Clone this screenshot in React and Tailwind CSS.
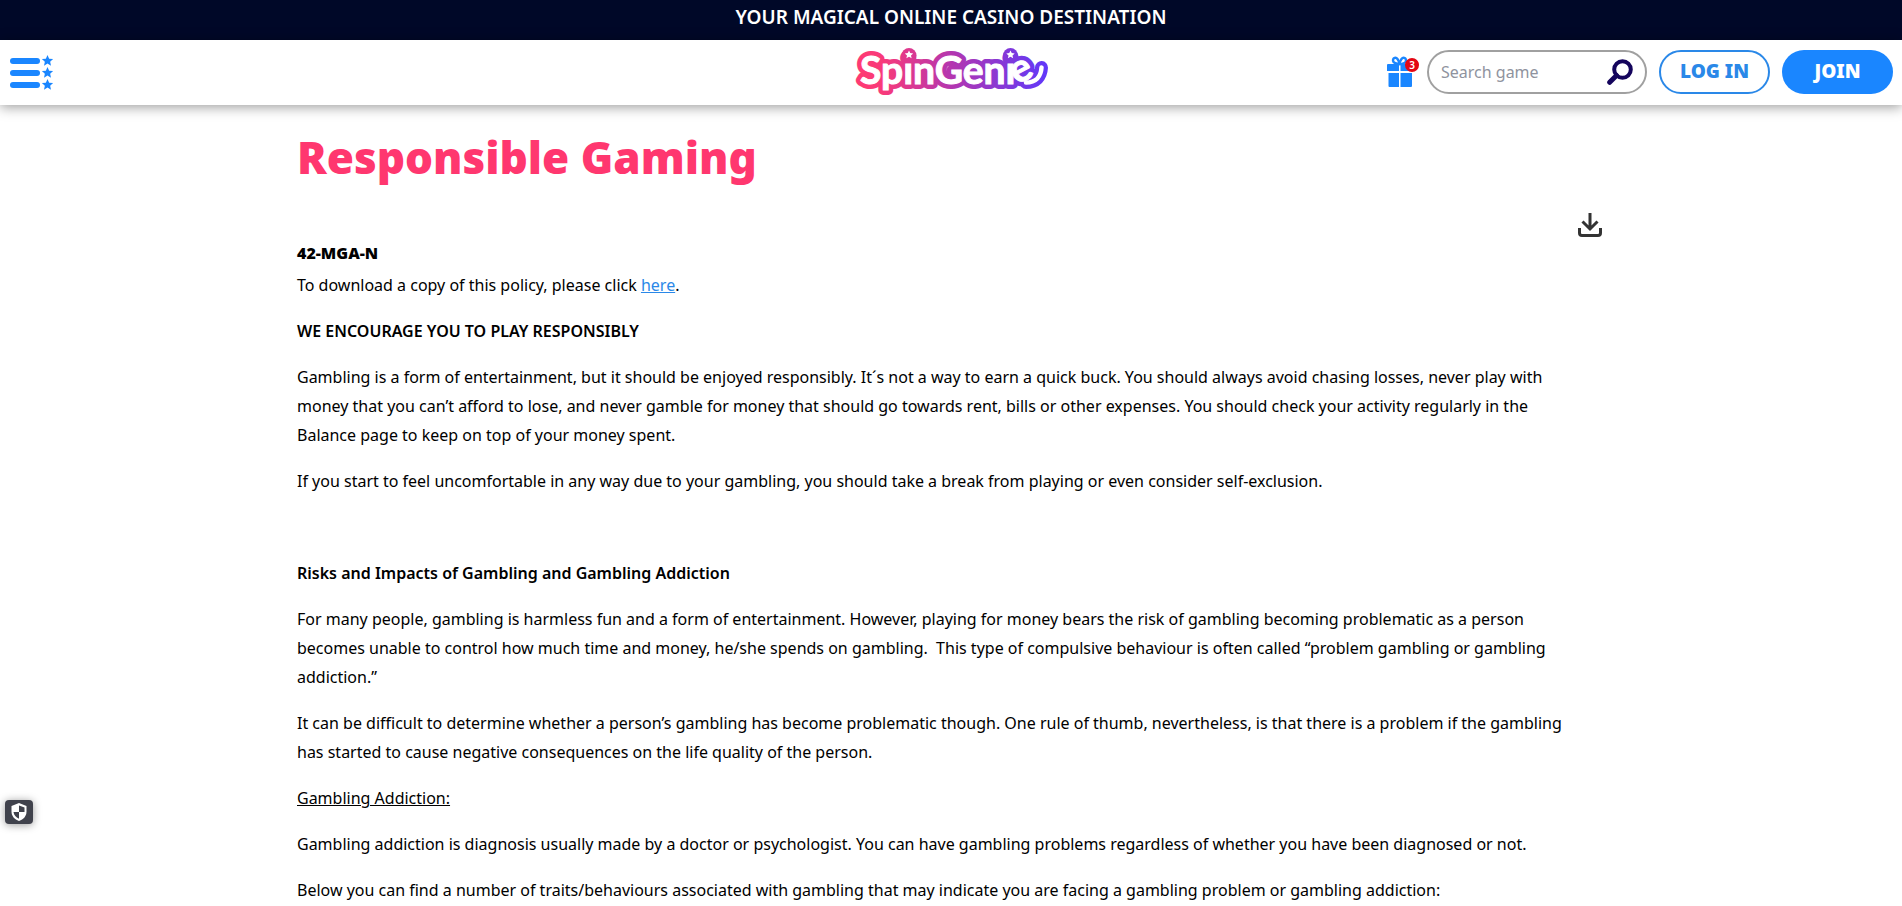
import React from "react";

const STAR = "M12 1l3.300 7.300 7.900.9-5.900 5.200 1.700 7.900L12 18.200l-7 4.100 1.700-7.900L.8 9.200l7.900-.9z";

function MenuIcon() {
  return (
    <svg width="44" height="36" viewBox="0 0 44 36" aria-hidden="true" fill="#1a86ff">
      {[0, 12, 24].map((y) => (
        <g key={y}>
          <rect x="0" y={y + 3} width="30" height="6" rx="3" />
          <svg x="31.500" y={y - 0.5} width="12" height="12" viewBox="0 0 24 24">
            <path d={STAR} />
          </svg>
        </g>
      ))}
    </svg>
  );
}

function Wordmark() {
  return (
    <>
      SpinGeni<tspan x="162" y="38" rotate="-28">e</tspan>
    </>
  );
}

function Logo() {
  const face = "font-['Lato',sans-serif] font-bold";
  return (
    <svg width="194" height="60" viewBox="0 -4 194 60" role="img" aria-label="SpinGenie" className="overflow-visible">
      <defs>
        <linearGradient id="brand" gradientUnits="userSpaceOnUse" x1="0" y1="0" x2="194" y2="0">
          <stop offset="0" stopColor="#ff3a72" />
          <stop offset="0.14" stopColor="#f83a7a" />
          <stop offset="0.5" stopColor="#b336b0" />
          <stop offset="0.8" stopColor="#7f38dc" />
          <stop offset="1" stopColor="#6038fb" />
        </linearGradient>
      </defs>
      <g fill="none" stroke="url(#brand)" strokeWidth="10" strokeLinejoin="round" strokeLinecap="round">
        <text x="5" y="37" fontSize="39" className={face}><Wordmark /></text>
        <path d="M171 35.500c10 0 15-6 15.500-15" strokeWidth="13" />
      </g>
      <text x="5" y="37" fontSize="39" fill="#fff" stroke="#fff" strokeWidth="1" className={face}><Wordmark /></text>
      <path d="M171 35.500c10 0 15-6 15.500-15" fill="none" stroke="#fff" strokeWidth="4.500" strokeLinecap="round" />
      {[54, 155.5].map((cx) => (
        <g key={cx}>
          <circle cx={cx} cy="8.500" r="7.500" fill="url(#brand)" />
          <svg x={cx - 4.5} y="3" width="9" height="9" viewBox="0 0 24 24">
            <path d={STAR} fill="#fff" />
          </svg>
        </g>
      ))}
    </svg>
  );
}

function GiftIcon() {
  return (
    <svg width="26" height="31" viewBox="0 0 26 31" aria-hidden="true" fill="#1a86ff">
      <g fill="none" stroke="#1a86ff" strokeWidth="2.400">
        <path d="M12.500 8C10 8 6 7 6 4.500C6 1.500 9 1 10.500 3Q12 5 12.500 8z" />
        <path d="M12.500 8C15 8 19 7 19 4.500C19 1.500 16 1 14.500 3Q13 5 12.500 8z" />
      </g>
      <path d="M1 8h11v7H0V9q0-1 1-1zM13.500 8H24q1 0 1 1v6H13.500zM1.500 17H12v14H2.500q-1 0-1-1zM13.500 17H25v13q0 1-1 1H13.500z" />
    </svg>
  );
}

function SearchIcon() {
  return (
    <svg width="26" height="26" viewBox="0 0 26 26" aria-hidden="true" fill="none" stroke="#14045c">
      <circle cx="15.500" cy="10.500" r="8.300" strokeWidth="4" />
      <path d="M9.500 16.500L2.700 23.300" strokeWidth="5" strokeLinecap="round" />
    </svg>
  );
}

function DownloadIcon() {
  return (
    <svg width="24" height="24" viewBox="0 0 24 24" aria-hidden="true" fill="none" stroke="#333" strokeWidth="3">
      <path d="M12 0v15M4.500 8.500L12 16l7.500-7.500" />
      <path d="M1.500 15v5q0 2.500 2.500 2.500h16q2.500 0 2.500-2.500v-5" />
    </svg>
  );
}

function ShieldIcon() {
  return (
    <svg width="16" height="18" viewBox="0 0 16 18" aria-hidden="true">
      <path d="M8 0l7.500 3v5.500c0 4.500-3 8-7.500 9.500C3.500 16.500.5 13 .5 8.500V3z" fill="#fff" />
      <path d="M8 2.500V9h5.500V4.600zM8 9v6.700C5 14.500 2.900 12 2.500 9z" fill="#40424c" />
    </svg>
  );
}

function P({ children }) {
  return <p className="mb-[17px]">{children}</p>;
}

export default function App() {
  return (
    <div className="h-screen overflow-hidden bg-white font-['Noto_Sans',sans-serif] text-black">
      <div className="flex h-10 justify-center bg-[#000828] text-[19px] leading-[34px] font-semibold text-white">
        YOUR MAGICAL ONLINE CASINO DESTINATION
      </div>
      <header className="grid h-[65px] grid-cols-[1fr_auto_1fr] items-center bg-white pr-[9px] pl-[10px] shadow-[0_2px_12px_rgba(0,0,0,0.4)]">
        <button type="button" aria-label="Open menu" className="justify-self-start">
          <MenuIcon />
        </button>
        <a href="#home" aria-label="SpinGenie home">
          <Logo />
        </a>
        <div className="flex items-center justify-end pb-0.5">
          <button type="button" aria-label="Offers" className="relative mr-[14px]">
            <GiftIcon />
            <span className="absolute top-0.5 left-[18px] flex size-3.5 items-center justify-center rounded-full bg-[#e30613] text-[10px] font-semibold text-white">
              3
            </span>
          </button>
          <form className="mr-3 flex h-11 w-[220px] items-center rounded-full border-2 border-[#a0a0a0] pr-3 pl-3">
            <input
              type="text"
              aria-label="Search game"
              placeholder="Search game"
              className="min-w-0 flex-1 text-base outline-none placeholder:text-[#8f939e]"
            />
            <button type="button" aria-label="Search">
              <SearchIcon />
            </button>
          </form>
          <button type="button" className="mr-3 h-11 w-[111px] rounded-full border-2 border-[#2a88e8] text-[19px] font-black text-[#2a88e8]">
            LOG IN
          </button>
          <button type="button" className="h-11 w-[111px] rounded-full bg-[#1a86ff] text-[19px] font-black text-white">
            JOIN
          </button>
        </div>
      </header>

      <main className="mx-auto w-full max-w-[1308px] text-base leading-[29px]">
        <h1 className="pt-[22px] text-[44px] leading-[60px] font-black text-[#ff376f]">Responsible Gaming</h1>
        <div className="mt-[26px] flex justify-end pr-[3px]">
          <button type="button" aria-label="Download policy">
            <DownloadIcon />
          </button>
        </div>
        <div className="pr-4">
          <h2 className="mb-0.5 text-base leading-8 font-black">42-MGA-N</h2>
          <P>
            To download a copy of this policy, please click{" "}
            <a href="#policy" className="text-[#2a88e8] underline">here</a>.
          </P>
          <P><strong className="font-semibold">WE ENCOURAGE YOU TO PLAY RESPONSIBLY</strong></P>
          <P>
            Gambling is a form of entertainment, but it should be enjoyed responsibly. It´s not a way to earn a quick buck. You should always avoid chasing losses, never play with money that you can’t afford to lose, and never gamble for money that should go towards rent, bills or other expenses. You should check your activity regularly in the Balance page to keep on top of your money spent.
          </P>
          <P>
            If you start to feel uncomfortable in any way due to your gambling, you should take a break from playing or even consider self-exclusion.
          </P>
          <P>&nbsp;</P>
          <P><strong className="font-semibold">Risks and Impacts of Gambling and Gambling Addiction</strong></P>
          <P>
            For many people, gambling is harmless fun and a form of entertainment. However, playing for money bears the risk of gambling becoming problematic as a person becomes unable to control how much time and money, he/she spends on gambling.&nbsp; This type of compulsive behaviour is often called “problem gambling or gambling addiction.”
          </P>
          <P>
            It can be difficult to determine whether a person’s gambling has become problematic though. One rule of thumb, nevertheless, is that there is a problem if the gambling has started to cause negative consequences on the life quality of the person.
          </P>
          <P><u>Gambling Addiction:</u></P>
          <P>
            Gambling addiction is diagnosis usually made by a doctor or psychologist. You can have gambling problems regardless of whether you have been diagnosed or not.
          </P>
          <P>
            Below you can find a number of traits/behaviours associated with gambling that may indicate you are facing a gambling problem or gambling addiction:
          </P>
        </div>
      </main>

      <button
        type="button"
        aria-label="Privacy settings"
        className="fixed bottom-[82px] left-[5px] flex h-6 w-7 items-center justify-center rounded-sm bg-[#40424c] shadow-[0_1px_8px_rgba(0,0,0,0.4)]"
      >
        <ShieldIcon />
      </button>
    </div>
  );
}
